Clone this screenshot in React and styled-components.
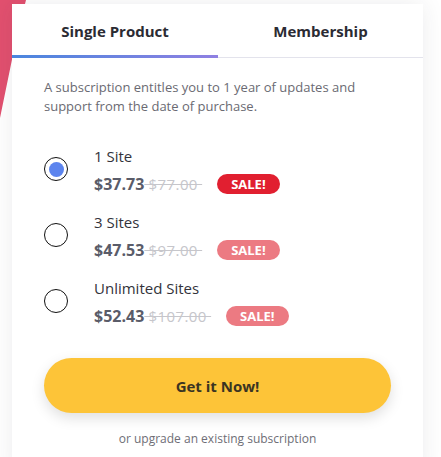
import React, { useState } from 'react';
import styled, { createGlobalStyle } from 'styled-components';

const GlobalStyle = createGlobalStyle`
  html, body {
    margin: 0;
    padding: 0;
    background: #ffffff;
    font-family: "Open Sans", Lato, sans-serif;
    overflow: hidden;
  }
`;

const Page = styled.div`
  position: relative;
  width: 441px;
  height: 457px;
  padding: 4px 0 0 12px;
  box-sizing: border-box;
  overflow: hidden;
`;

const Ribbon = styled.div`
  position: absolute;
  left: 0;
  top: 0;
  width: 30px;
  height: 125px;
  background: #e2506f;
  clip-path: polygon(0 0, 26px 0, 16px 40px, 0 118px);
`;

const Card = styled.div`
  position: relative;
  width: 411px;
  background: #fff;
  box-shadow: 0 0 22px rgba(40, 40, 60, 0.09);
  min-height: 470px;
`;

const Tabs = styled.div`
  display: grid;
  grid-template-columns: 206px 1fr;
  border-bottom: 1px solid #e3e3ec;
`;

const Tab = styled.div`
  position: relative;
  height: 53px;
  display: flex;
  align-items: center;
  justify-content: center;
  font-size: 15px;
  font-weight: 700;
  color: #2b2b33;

  &::after {
    content: '';
    display: ${p => (p.$active ? 'block' : 'none')};
    position: absolute;
    left: 0;
    right: 0;
    bottom: -1px;
    height: 3px;
    background: linear-gradient(90deg, #4a86de, #8f80e2);
  }
`;

const Body = styled.div`
  padding: 20px 32px 0 32px;
`;

const Intro = styled.p`
  margin: 0;
  font-size: 13px;
  line-height: 19px;
  color: #6a6a72;
`;

const Options = styled.div`
  display: flex;
  flex-direction: column;
  gap: 16px;
  margin-top: 30px;
`;

const Option = styled.label`
  display: flex;
  align-items: flex-start;
  gap: 26px;
  cursor: pointer;
`;

const Radio = styled.span`
  width: 24px;
  height: 24px;
  margin-top: 11px;
  box-sizing: border-box;
  border: 1.5px solid #111;
  border-radius: 50%;
  display: flex;
  align-items: center;
  justify-content: center;
  flex-shrink: 0;

  &::before {
    content: '';
    width: 15px;
    height: 15px;
    border-radius: 50%;
    background: ${p => (p.$checked ? '#5c84ee' : 'transparent')};
  }
`;

const OptionText = styled.div`
  display: flex;
  flex-direction: column;
`;

const OptionName = styled.div`
  font-size: 15px;
  line-height: 20px;
  color: #33333b;
  margin-bottom: 6px;
`;

const PriceRow = styled.div`
  display: flex;
  align-items: center;
  height: 24px;
`;

const Price = styled.span`
  font-size: 16px;
  font-weight: 700;
  color: #5a5c69;
`;

const OldPrice = styled.span`
  font-size: 15px;
  letter-spacing: 0.4px;
  color: #c6c6cb;
  text-decoration: line-through;
  white-space: pre;
`;

const Badge = styled.span`
  margin-left: 15px;
  height: 20px;
  padding: 0 14px;
  border-radius: 10px;
  display: inline-flex;
  align-items: center;
  font-size: 13px;
  font-weight: 700;
  color: #fff;
  background: ${p => (p.$active ? '#e11f30' : '#ec7a82')};
`;

const BuyButton = styled.button`
  display: block;
  width: 100%;
  height: 55px;
  margin-top: 30px;
  border: none;
  border-radius: 28px;
  background: #fdc438;
  box-shadow: 0 5px 14px rgba(0, 0, 0, 0.13);
  font-family: inherit;
  font-size: 15px;
  font-weight: 700;
  color: #3b3422;
  cursor: pointer;
`;

const Upgrade = styled.div`
  margin-top: 18px;
  text-align: center;
  font-size: 12px;
  line-height: 16px;
  color: #6e6e76;
`;

const plans = [
  { name: '1 Site', price: '$37.73', old: '$77.00' },
  { name: '3 Sites', price: '$47.53', old: '$97.00' },
  { name: 'Unlimited Sites', price: '$52.43', old: '$107.00' },
];

export default function App() {
  const [selected, setSelected] = useState(0);

  return (
    <>
      <GlobalStyle />
      <Page>
        <Ribbon />
        <Card>
          <Tabs>
            <Tab $active>Single Product</Tab>
            <Tab>Membership</Tab>
          </Tabs>
          <Body>
            <Intro>
              A subscription entitles you to 1 year of updates and support from the date of purchase.
            </Intro>
            <Options>
              {plans.map((plan, i) => (
                <Option key={plan.name} onClick={() => setSelected(i)}>
                  <Radio $checked={selected === i} />
                  <OptionText>
                    <OptionName>{plan.name}</OptionName>
                    <PriceRow>
                      <Price>{plan.price}</Price>
                      <OldPrice>{` ${plan.old} `}</OldPrice>
                      <Badge $active={selected === i}>SALE!</Badge>
                    </PriceRow>
                  </OptionText>
                </Option>
              ))}
            </Options>
            <BuyButton>Get it Now!</BuyButton>
            <Upgrade>or upgrade an existing subscription</Upgrade>
          </Body>
        </Card>
      </Page>
    </>
  );
}
